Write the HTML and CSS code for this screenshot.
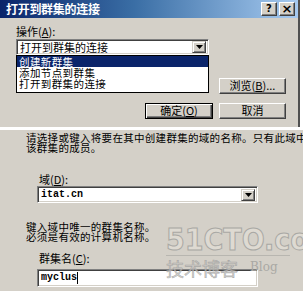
FILE: index.html
```html
<!DOCTYPE html>
<html>
<head>
<meta charset="utf-8">
<link rel="stylesheet" href="styles.css">
</head>
<body>
<div class="dialog">
  <div class="titlebar">
    <span class="title">打开到群集的连接</span>
    <span class="capbtns"><span class="capbtn">?</span><span class="capbtn x">×</span></span>
  </div>
  <div class="dbody">
    <div class="label">操作(<u>A</u>):</div>
    <div class="combo c1">
      <span class="val">打开到群集的连接</span>
      <span class="ddbtn"><svg width="7" height="4" viewBox="0 0 7 4"><path d="M0 0h7L3.5 4z" fill="#000"/></svg></span>
    </div>
    <div class="listrow">
      <div class="list">
        <div class="item sel">创建新群集</div>
        <div class="item">添加节点到群集</div>
        <div class="item">打开到群集的连接</div>
      </div>
      <div class="btn browse">浏览(<u>B</u>)...</div>
    </div>
    <div class="btnrow">
      <div class="btn default">确定(<u>O</u>)</div>
      <div class="btn">取消</div>
    </div>
  </div>
</div>
<div class="sep"></div>
<div class="wizard">
  <div class="para">
    <div class="pline">请选择或键入将要在其中创建群集的域的名称。只有此域中</div>
    <div class="pline">该群集的成员。</div>
  </div>
  <div class="wlabel l1">域(<u>D</u>):</div>
  <div class="combo c2">
    <span class="mono">itat.cn</span>
    <span class="ddbtn"><svg width="7" height="4" viewBox="0 0 7 4"><path d="M0 0h7L3.5 4z" fill="#000"/></svg></span>
  </div>
  <div class="para p2">
    <div class="pline">键入域中唯一的群集名称。</div>
    <div class="pline">必须是有效的计算机名称。</div>
  </div>
  <div class="wlabel l2">群集名(<u>C</u>):</div>
  <div class="textbox"><span class="mono">myclus</span><span class="caret"></span></div>
  <div class="watermark">
    <div class="wm1">51CTO.com</div>
    <div class="wmline"></div>
    <div class="wmrow"><span class="wm2">技术博客</span><span class="wm3">Blog</span></div>
  </div>
</div>
</body>
</html>
```

FILE: styles.css
```css
html, body {
  margin: 0;
  padding: 0;
}
body {
  width: 303px;
  height: 294px;
  overflow: hidden;
  background: #fff;
  font-family: "Noto Sans CJK SC", "DejaVu Sans", sans-serif;
  font-size: 11px;
  color: #000;
}
u { text-decoration: underline; text-underline-offset: 1px; }

.dialog {
  width: 298px;
  height: 127px;
  background: #d4d0c8;
  border-right: 2px solid #505050;
}
.titlebar {
  height: 18px;
  background: linear-gradient(to right, #0a246a 0%, #3a6ea5 45%, #a6caf0 100%);
  display: flex;
  align-items: center;
  justify-content: space-between;
  padding: 0 3px 0 6px;
}
.title {
  color: #fff;
  font-weight: bold;
  font-size: 12px;
  line-height: 14px;
  letter-spacing: -0.3px;
}
.capbtns { display: flex; gap: 2px; }
.capbtn {
  width: 14px;
  height: 12px;
  background: #d4d0c8;
  border: 1px solid;
  border-color: #fff #404040 #404040 #fff;
  box-shadow: inset -1px -1px #808080;
  font-family: "DejaVu Sans", sans-serif;
  font-weight: bold;
  font-size: 10px;
  line-height: 12px;
  text-align: center;
  box-sizing: content-box;
}
.capbtn.x { font-size: 13px; }

.dbody {
  padding: 7px 12px 0 16px;
}
.label {
  line-height: 12px;
  height: 12px;
  margin-bottom: 2px;
}
.combo {
  box-sizing: border-box;
  background: #fff;
  border: 1px solid;
  border-color: #808080 #fff #fff #808080;
  box-shadow: inset 1px 1px #404040, inset -1px -1px #d4d0c8;
  display: flex;
  align-items: center;
  justify-content: space-between;
  padding: 2px 2px 2px 3px;
}
.c1 {
  width: 193px;
  height: 16px;
  line-height: 12px;
}
.val { line-height: 12px; }
.ddbtn {
  width: 12px;
  height: 10px;
  background: #d4d0c8;
  border: 1px solid;
  border-color: #d4d0c8 #404040 #404040 #d4d0c8;
  box-shadow: inset 1px 1px #fff, inset -1px -1px #808080;
  display: flex;
  align-items: center;
  justify-content: center;
}
.listrow {
  display: flex;
  align-items: flex-end;
  gap: 10px;
}
.list {
  width: 193px;
  box-sizing: border-box;
  background: #fff;
  border: 1px solid #000;
  padding: 0 0 3px 0;
}
.item {
  height: 11px;
  line-height: 11px;
  font-size: 10.5px;
  letter-spacing: 0.4px;
  padding-left: 2px;
}
.item.sel {
  background: #0a246a;
  color: #fff;
}
.btn {
  box-sizing: border-box;
  width: 67px;
  height: 16px;
  background: #d4d0c8;
  border: 1px solid;
  border-color: #fff #404040 #404040 #fff;
  box-shadow: inset -1px -1px #808080;
  text-align: center;
  line-height: 13px;
  font-size: 11px;
}
.browse { margin-bottom: -1px; }
.btnrow {
  display: flex;
  justify-content: flex-end;
  gap: 6px;
  margin-top: 10px;
}
.btn.default {
  width: 68px;
  border: 1px solid #000;
  box-shadow: inset 1px 1px #fff, inset -1px -1px #404040, inset -2px -2px #808080;
}

.sep { height: 3px; }

.wizard {
  position: relative;
  height: 161px;
  background: #d4d0c8;
  padding: 3px 0 0 26px;
  box-sizing: border-box;
  overflow: hidden;
}
.para {
  white-space: nowrap;
}
.pline {
  height: 10px;
  line-height: 10px;
  font-size: 10.5px;
  letter-spacing: 0.3px;
}
.wlabel {
  line-height: 12px;
  margin-left: 13px;
}
.l1 { margin-top: 20px; }
.c2 {
  margin-top: 1px;
  margin-left: 11px;
  width: 221px;
  height: 17px;
}
.mono {
  font-family: "Liberation Mono", "DejaVu Sans Mono", monospace;
  font-size: 10px;
  font-weight: bold;
  line-height: 12px;
}
.p2 { margin-top: 19px; }
.l2 { margin-top: 10px; }
.textbox {
  box-sizing: border-box;
  margin-top: 5px;
  margin-left: 11px;
  width: 221px;
  height: 18px;
  background: #fff;
  border: 1px solid;
  border-color: #808080 #fff #fff #808080;
  box-shadow: inset 1px 1px #404040, inset -1px -1px #d4d0c8;
  padding: 2px 3px;
  display: flex;
  align-items: center;
}
.caret {
  width: 1px;
  height: 12px;
  background: #000;
}
.watermark {
  position: absolute;
  left: 166px;
  top: 97px;
  width: 134px;
  pointer-events: none;
}
.wm1 {
  font-family: "DejaVu Sans Condensed", "DejaVu Sans", sans-serif;
  font-weight: bold;
  font-size: 30px;
  line-height: 26px;
  letter-spacing: 0px;
  color: #dedad2;
  -webkit-text-stroke: 1px #a9a8a4;
  white-space: nowrap;
}
.wmline {
  height: 1px;
  width: 124px;
  background: #b8b6b0;
  margin-top: 2px;
}
.wmrow {
  display: flex;
  align-items: flex-end;
  margin-top: 2px;
}
.wm2 {
  font-size: 18px;
  line-height: 20px;
  color: rgba(200, 198, 194, 0.75);
  -webkit-text-stroke: 0.6px rgba(150, 150, 150, 0.7);
}
.wm3 {
  font-family: "DejaVu Serif", serif;
  font-size: 12px;
  line-height: 14px;
  color: #a9a8a4;
  margin-left: 12px;
  margin-bottom: 4px;
}
```
